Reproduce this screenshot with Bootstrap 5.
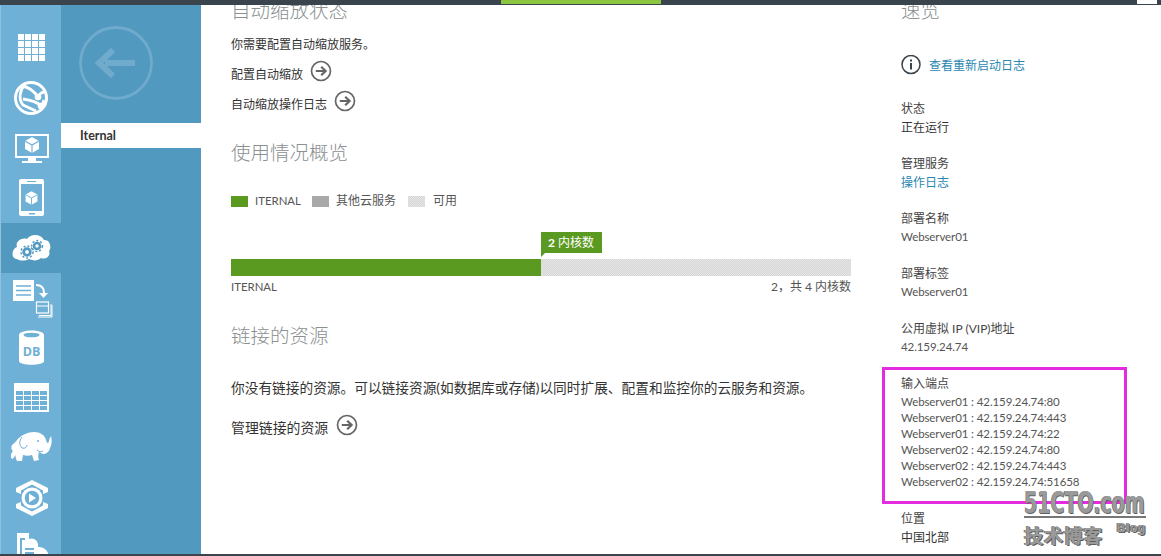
<!DOCTYPE html>
<html lang="zh-CN">
<head>
<meta charset="utf-8">
<title>Iternal</title>
<link href="https://cdn.jsdelivr.net/npm/bootstrap@5.3.0/dist/css/bootstrap.min.css" rel="stylesheet">
<style>
html,body{height:100%;margin:0;overflow:hidden;background:#fff}
body{font-family:Lato,"Noto Sans CJK SC",sans-serif;font-size:12px;color:#3c3c3c;position:relative}
.topstrip{height:5px;background:#3a444d;flex:none}
.topgreen{width:160px;margin-left:501px;background:#8cc540;height:4px}
.topwhite{width:20px;margin-left:476px;background:#fff;height:4px}
.footstrip{height:2px;background:#3a444d;flex:none}
.shell{flex:1 1 auto;min-height:0;overflow:hidden}
.rail{width:61px;flex:none;background:#6fb0d6;border-left:1px solid #8fc0dc;padding-top:18px}
.railitem{height:50px;display:block}
.railitem svg{display:block;width:60px;height:50px;overflow:hidden}
.railitem.on{background:#5299c0}
.navpane{width:140px;flex:none;background:#5299c0}
.backzone{height:118px}
.backzone svg{display:block;width:140px;height:118px}
.navactive{height:25px;line-height:25px;background:#fff;color:#333;font-weight:700;padding-left:19px;font-size:12.5px}
.midcol{width:700px;flex:none;padding-left:30px}
.sidecol{flex:1 1 auto;min-width:0}
.headline{font-size:19.5px;line-height:24px;font-weight:300;color:#8a8f90;margin:0}
.headline.first{margin-top:-6px}
.plain{line-height:20px;color:#333;margin:0}
.big{font-size:13.7px}
.bigger{font-size:13.9px}
.actionrow{line-height:20px;color:#333;height:20px}
.arrowbtn{display:block;width:22px;height:22px;flex:none;margin-top:-5px;margin-left:7px}
.bigger .arrowbtn{margin-left:8px;margin-top:-4px}
.gap-intro{margin-top:12px}
.gap-row{margin-top:10px}
.gap-h{margin-top:26px}
.gap-h2{margin-top:27px}
.gap-legend{margin-top:26px}
.gap-callout{margin-top:21px}
.gap-bar{margin-top:6px}
.gap-labels{margin-top:1px}
.gap-para{margin-top:30px}
.gap-manage{margin-top:20px}
.gap-info{margin-top:31px}
.gap-facts{margin-top:23px}
.legendbox{width:17px;height:11px;flex:none}
.legendlabel{margin-left:7px;color:#555}
.legendlabel.latin{font-size:11.4px}
.legendbox.follow{margin-left:11px}
.legendbox.last{margin-left:12px}
.legendlabel.wider{margin-left:8px}
.c-green{background:#5b9a21}.c-gray{background:#a9a9a9}
.c-free{background:repeating-conic-gradient(#d6d6d6 0 25%,#e6e6e6 0 50%) 0 0/2px 2px}
.callout{width:61px;height:21px;line-height:21px;background:#5b9a21;color:#fff;margin-left:310px;padding-left:7px;position:relative;font-size:12px}
.callout b{font-weight:700}
.callout::after{content:"";position:absolute;left:0;top:21px;border-top:4px solid #5b9a21;border-right:4px solid transparent}
.usebar{height:17px;width:620px}
.usefill{width:310px;background:#5b9a21}
.wide{width:620px}
.infolink{color:#2a87b0;line-height:20px;text-decoration:none;margin-left:8px;margin-top:2px}
.factgroup{margin-bottom:17px;line-height:19px}
.factlabel{color:#444;line-height:19px}
.factvalue{color:#333}
.factmuted{color:#555}
.latinvalue{color:#555;font-size:11.5px;letter-spacing:-.1px;line-height:17px;padding-bottom:2px}
.factlink{color:#2a87b0;text-decoration:none}
.eplist{margin:1px 0 19px;line-height:16px;color:#555;padding:0;list-style:none;font-size:11.5px;letter-spacing:-.1px}
.annot{position:absolute;left:882px;top:367px;width:245px;height:137px;border:3px solid #e52be0;pointer-events:none}
.wm{position:absolute;left:1024px;top:488px;width:122px;height:60px;color:#9a9a9a;font-family:"Liberation Sans",sans-serif;font-weight:700;text-shadow:1px 1px 0 #5f5f5f,-1px 0 0 #777}
.wmtop{font-size:31px;line-height:28px;letter-spacing:-.2px;font-family:"DejaVu Sans",sans-serif;transform:scaleX(.62);transform-origin:left;white-space:nowrap}
.wmline{height:2px;background:#777}
.wmcn{font-family:"Noto Sans CJK SC",sans-serif;font-size:19.5px;line-height:26px;font-weight:700;white-space:nowrap;letter-spacing:.2px;margin-top:4px}
.wmblog{font-size:12.5px;line-height:16px;margin-left:14px;letter-spacing:.3px;align-self:flex-start;margin-top:2px}
</style>
</head>
<body class="d-flex flex-column">
<svg width="0" height="0" class="position-absolute">
<defs>
<symbol id="go" viewBox="0 0 22 22"><circle cx="11" cy="11" r="9.500" fill="#fff" stroke="#666" stroke-width="1.700"/><path d="M5.800 11H15M11.200 6.800 15.600 11l-4.400 4.200" fill="none" stroke="#666" stroke-width="2.200"/></symbol>
<g id="cube"><path d="M0-8 7-4V4L0 8-7 4V-4Z" fill="#fff"/><path d="M-7-4 0 0 7-4M0 0V8" fill="none" stroke="#6fb0d6" stroke-width="1.100"/></g>
</defs>
</svg>

<div class="topstrip d-flex"><div class="topgreen"></div><div class="topwhite"></div></div>

<div class="shell d-flex">
  <nav class="rail">
    <a class="railitem"><svg viewBox="0 0 60 50"><g fill="#fff"><rect x="17" y="11" width="6" height="6"/><rect x="24" y="11" width="6" height="6"/><rect x="31" y="11" width="6" height="6"/><rect x="38" y="11" width="6" height="6"/><rect x="17" y="18" width="6" height="6"/><rect x="24" y="18" width="6" height="6"/><rect x="31" y="18" width="6" height="6"/><rect x="38" y="18" width="6" height="6"/><rect x="17" y="25" width="6" height="6"/><rect x="24" y="25" width="6" height="6"/><rect x="31" y="25" width="6" height="6"/><rect x="38" y="25" width="6" height="6"/><rect x="17" y="32" width="6" height="6"/><rect x="24" y="32" width="6" height="6"/><rect x="31" y="32" width="6" height="6"/><rect x="38" y="32" width="6" height="6"/></g></svg></a>
    <a class="railitem"><svg viewBox="0 0 60 50"><circle cx="30" cy="25" r="15.500" fill="none" stroke="#fff" stroke-width="3"/><path d="M24 11C19 17 17 26 22 32L35 38M21 13C27 14 33 18 37 24M22 26C29 27 36 29 41 33M37 24C39 20 41 19 44 19M41 33L43 27" fill="none" stroke="#fff" stroke-width="2.800"/><circle cx="37" cy="24" r="3.300" fill="#fff"/><circle cx="40" cy="33" r="3.300" fill="#fff"/></svg></a>
    <a class="railitem"><svg viewBox="0 0 60 50"><path d="M15 12h32v22H15z" fill="none" stroke="#fff" stroke-width="2"/><path d="M27 35h8v3h6v2H21v-2h6z" fill="#fff"/><use href="#cube" transform="translate(31 22)"/></svg></a>
    <a class="railitem"><svg viewBox="0 0 60 50"><rect x="18" y="6" width="25" height="37" rx="2" fill="#fff"/><rect x="20" y="11" width="21" height="27" fill="#6fb0d6"/><rect x="26" y="8" width="9" height="1" fill="#6fb0d6"/><rect x="28" y="40" width="6" height="1.500" fill="#6fb0d6"/><g transform="translate(30.500 25) scale(.85)"><use href="#cube"/></g></svg></a>
    <a class="railitem on"><svg viewBox="0 0 60 50"><path d="M17 39c-6 0-6-10 0-12-2-5 4-10 10-8 4-6 14-5 17 1 6-1 8 8 5 11 2 5-3 9-8 7-3 3-8 3-12 1-4 2-9 2-12 0z" fill="#fff" transform="translate(-1 -3)"/><g fill="none" stroke="#5299c0"><circle cx="26" cy="29" r="3.300" stroke-width="2.800"/><circle cx="26" cy="29" r="6" stroke-width="1.500" stroke-dasharray="2 2"/><circle cx="36" cy="23" r="3" stroke-width="2.600"/><circle cx="36" cy="23" r="5.400" stroke-width="1.500" stroke-dasharray="2 2"/></g></svg></a>
    <a class="railitem"><svg viewBox="0 0 60 50"><rect x="12" y="7" width="21" height="21" fill="#fff"/><path d="M15 13h15M15 17.500h15M15 22h15" stroke="#6fb0d6" stroke-width="1.500"/><path d="M35 12c5 0 8 3 8 8" fill="none" stroke="#fff" stroke-width="2"/><path d="M38 20h9l-4.500 5z" fill="#fff"/><path d="M38 42.500h12V31" fill="none" stroke="#fff"/><path d="M37 44h14V32" fill="none" stroke="#fff"/><rect x="35.500" y="29" width="12" height="11" fill="#6fb0d6" stroke="#fff" stroke-width="1.200"/><path d="M36 33h11" stroke="#fff"/></svg></a>
    <a class="railitem"><svg viewBox="0 0 60 50"><path d="M18 12c0-6 25-6 25 0v26c0 5-25 5-25 0z" fill="#fff"/><ellipse cx="30.500" cy="12" rx="8" ry="2.300" fill="#6fb0d6"/><text x="30.500" y="33" text-anchor="middle" font-family="Open Sans,sans-serif" font-weight="700" font-size="12.500" fill="#6fb0d6">DB</text></svg></a>
    <a class="railitem"><svg viewBox="0 0 60 50"><rect x="13" y="10" width="35" height="29" fill="#fff"/><g fill="#6fb0d6"><rect x="15" y="18" width="7" height="4"/><rect x="23" y="18" width="7" height="4"/><rect x="31" y="18" width="7" height="4"/><rect x="39" y="18" width="7" height="4"/><rect x="15" y="23" width="7" height="4"/><rect x="23" y="23" width="7" height="4"/><rect x="31" y="23" width="7" height="4"/><rect x="39" y="23" width="7" height="4"/><rect x="15" y="28" width="7" height="4"/><rect x="23" y="28" width="7" height="4"/><rect x="31" y="28" width="7" height="4"/><rect x="39" y="28" width="7" height="4"/><rect x="15" y="33" width="7" height="4"/><rect x="23" y="33" width="7" height="4"/><rect x="31" y="33" width="7" height="4"/><rect x="39" y="33" width="7" height="4"/></g></svg></a>
    <a class="railitem"><svg viewBox="0 0 60 50"><path d="M11 22c2-2 4-3 5-5 4-5 11-8 17-8 6 0 11 3 12 8 1 4 3 4 3 0l2-4c1 3 1 9-1 12-1 4-4 6-7 6l-4-2c-1 3-1 6 0 8l-5 1-2-6c-3 1-6 1-9 0l-1 6-5 0c-1-2-2-4-1-6-2 2-3 4-4 4-2-3-1-6 1-8-2-1-2-4-1-6z" fill="#fff"/><path d="M21 14c-3 4-3 8 0 11 3 1 5-1 5-3" fill="none" stroke="#6fb0d6" stroke-width="1"/><circle cx="37" cy="18" r="1" fill="#6fb0d6"/><path d="M36 27c2 2 4 2 6 1" fill="none" stroke="#6fb0d6"/></svg></a>
    <a class="railitem"><svg viewBox="0 0 60 50"><path d="M31 7 47 15v4l-5 2v-3.500l-11-6-11 6V21l-5-2v-4zM31 43 47 35v-4l-5-2v3.500l-11 6-11-6V29l-5 2v4z" fill="#fff"/><circle cx="31" cy="25" r="10.500" fill="#fff"/><circle cx="31" cy="25" r="7.300" fill="#6fb0d6"/><path d="M28 20.500v9l7-4.500z" fill="#fff"/></svg></a>
    <a class="railitem"><svg viewBox="0 0 60 50"><path d="M16 10h12v6c5-2 10 2 9 8 6 0 10 3 11 10v16H16z" fill="#fff"/><path d="M24 16h-4v34h4M24 26h9M24 30h9M24 34h9M24 38h9" fill="none" stroke="#6fb0d6" stroke-width="2"/></svg></a>
  </nav>
  <aside class="navpane">
    <div class="backzone"><svg viewBox="0 0 140 118"><circle cx="55" cy="58" r="35.500" fill="none" stroke="#70aacc" stroke-width="2.800"/><path d="M74 58H44M52 45 38 58l14 13" fill="none" stroke="#70aacc" stroke-width="6"/></svg></div>
    <div class="navactive">Iternal</div>
  </aside>
  <main class="midcol">
    <h2 class="headline first">自动缩放状态</h2>
    <p class="plain gap-intro">你需要配置自动缩放服务。</p>
    <div class="actionrow d-flex align-items-start gap-row"><span>配置自动缩放</span><svg class="arrowbtn"><use href="#go"/></svg></div>
    <div class="actionrow d-flex align-items-start gap-row"><span>自动缩放操作日志</span><svg class="arrowbtn"><use href="#go"/></svg></div>
    <h2 class="headline gap-h">使用情况概览</h2>
    <div class="d-flex align-items-center plain gap-legend">
      <span class="legendbox c-green"></span><span class="legendlabel latin">ITERNAL</span>
      <span class="legendbox c-gray follow"></span><span class="legendlabel">其他云服务</span>
      <span class="legendbox c-free last"></span><span class="legendlabel wider">可用</span>
    </div>
    <div class="callout gap-callout"><b>2</b> 内核数</div>
    <div class="usebar c-free d-flex gap-bar"><div class="usefill"></div></div>
    <div class="wide d-flex justify-content-between plain factmuted gap-labels"><span class="legendlabel latin ms-0">ITERNAL</span><span>2，共 4 内核数</span></div>
    <h2 class="headline gap-h2">链接的资源</h2>
    <p class="plain big gap-para">你没有链接的资源。可以链接资源(如数据库或存储)以同时扩展、配置和监控你的云服务和资源。</p>
    <div class="actionrow bigger d-flex align-items-start gap-manage"><span>管理链接的资源</span><svg class="arrowbtn"><use href="#go"/></svg></div>
  </main>
  <aside class="sidecol">
    <h2 class="headline first">速览</h2>
    <div class="d-flex align-items-center gap-info">
      <svg width="20" height="20" viewBox="0 0 20 20"><circle cx="10" cy="9.500" r="9" fill="none" stroke="#3a444d" stroke-width="1.500"/><rect x="9" y="8" width="2" height="6.500" fill="#3a444d"/><rect x="9" y="4.500" width="2" height="2" fill="#3a444d"/></svg>
      <a class="infolink" href="#">查看重新启动日志</a>
    </div>
    <div class="factgroup gap-facts"><div class="factlabel">状态</div><div class="factvalue">正在运行</div></div>
    <div class="factgroup"><div class="factlabel">管理服务</div><a class="factlink d-block" href="#">操作日志</a></div>
    <div class="factgroup"><div class="factlabel">部署名称</div><div class="latinvalue">Webserver01</div></div>
    <div class="factgroup"><div class="factlabel">部署标签</div><div class="latinvalue">Webserver01</div></div>
    <div class="factgroup"><div class="factlabel">公用虚拟 IP (VIP)地址</div><div class="latinvalue">42.159.24.74</div></div>
    <div class="factlabel">输入端点</div>
    <ul class="eplist">
      <li>Webserver01 : 42.159.24.74:80</li>
      <li>Webserver01 : 42.159.24.74:443</li>
      <li>Webserver01 : 42.159.24.74:22</li>
      <li>Webserver02 : 42.159.24.74:80</li>
      <li>Webserver02 : 42.159.24.74:443</li>
      <li>Webserver02 : 42.159.24.74:51658</li>
    </ul>
    <div class="factgroup"><div class="factlabel">位置</div><div class="factvalue">中国北部</div></div>
  </aside>
</div>

<div class="footstrip"></div>

<div class="annot"></div>
<div class="wm">
  <div class="wmtop">51CTO.com</div>
  <div class="wmline"></div>
  <div class="d-flex"><span class="wmcn">技术博客</span><span class="wmblog">Blog</span></div>
</div>
</body>
</html>
